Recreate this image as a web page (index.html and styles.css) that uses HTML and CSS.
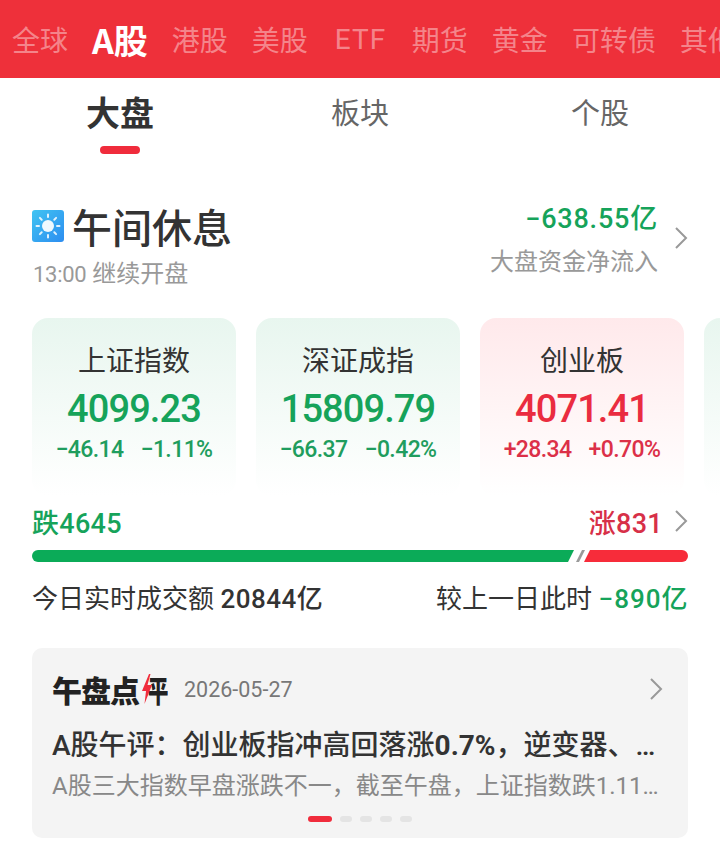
FILE: index.html
```html
<!DOCTYPE html>
<html lang="zh-CN">
<head>
  <meta charset="UTF-8">
  <meta name="viewport" content="width=device-width, initial-scale=1.0">
  <title>A股 大盘</title>
  <link rel="stylesheet" href="styles.css">
</head>
<body>
  <div class="page">
    <!-- 顶部市场切换 -->
    <nav class="market-nav">
      <span>全球</span>
      <span class="active">A股</span>
      <span>港股</span>
      <span>美股</span>
      <span class="etf">ETF</span>
      <span>期货</span>
      <span>黄金</span>
      <span>可转债</span>
      <span>其他</span>
    </nav>

    <div class="sub-nav">
      <div class="sub-item active">大盘</div>
      <div class="sub-item">板块</div>
      <div class="sub-item">个股</div>
    </div>

    <!-- 状态 -->
    <section class="status">
      <div class="status-left">
        <div class="status-title">
          <svg class="sun" viewBox="0 0 32 32">
            <defs>
              <linearGradient id="sky" x1="0" y1="0" x2="1" y2="1">
                <stop offset="0" stop-color="#40c4f2"/>
                <stop offset="1" stop-color="#2d8df0"/>
              </linearGradient>
            </defs>
            <rect width="32" height="32" rx="3" fill="url(#sky)"/>
            <circle cx="16" cy="16" r="6" fill="#fff" fill-opacity=".92"/>
            <g stroke="#fff" stroke-width="2" stroke-linecap="round" stroke-opacity=".85">
              <path d="M16 4.500v2.500M16 25v2.500M4.500 16H7M25 16h2.500M7.900 7.900l1.800 1.800M22.300 22.300l1.800 1.800M24.100 7.900l-1.800 1.800M9.700 22.300l-1.800 1.800"/>
            </g>
          </svg>
          <span>午间休息</span>
        </div>
        <div class="status-sub"><span class="num">13:00</span> 继续开盘</div>
      </div>
      <div class="flow">
        <div class="flow-text">
          <div class="flow-value num">−638.55<span class="cjk">亿</span></div>
          <div class="flow-label">大盘资金净流入</div>
        </div>
        <svg class="chevron" viewBox="0 0 14 24"><path d="M2 2l10 10L2 22"/></svg>
      </div>
    </section>

    <!-- 指数卡片 -->
    <div class="cards">
      <div class="card down">
        <div class="card-name">上证指数</div>
        <div class="card-price">4099.23</div>
        <div class="card-change"><span>−46.14</span><span>−1.11%</span></div>
      </div>
      <div class="card down">
        <div class="card-name">深证成指</div>
        <div class="card-price">15809.79</div>
        <div class="card-change"><span>−66.37</span><span>−0.42%</span></div>
      </div>
      <div class="card up">
        <div class="card-name">创业板</div>
        <div class="card-price">4071.41</div>
        <div class="card-change"><span>+28.34</span><span>+0.70%</span></div>
      </div>
      <div class="card down"></div>
    </div>

    <!-- 涨跌分布 -->
    <div class="breadth">
      <div class="breadth-head">
        <span class="fall">跌<span class="num">4645</span></span>
        <div class="rise-wrap">
          <span class="rise">涨<span class="num">831</span></span>
          <svg class="chevron" viewBox="0 0 14 24"><path d="M2 2l10 10L2 22"/></svg>
        </div>
      </div>
      <div class="bar">
        <div class="bar-fall"></div>
        <div class="bar-slash"></div>
        <div class="bar-rise"></div>
      </div>
      <div class="turnover">
        <div>今日实时成交额 <b class="num">20844</b><b>亿</b></div>
        <div>较上一日此时 <b class="num fall">−890</b><b class="fall">亿</b></div>
      </div>
    </div>

    <!-- 午盘点评 -->
    <section class="review">
      <div class="review-head">
        <div class="review-logo">午盘点<svg class="bolt" viewBox="0 0 10 30"><path d="M7 0L0 17h4L2.500 30 10 11H5.500L8.500 0z"/></svg><span class="logo-last">平</span></div>
        <span class="review-date">2026-05-27</span>
        <svg class="chevron" viewBox="0 0 14 24"><path d="M2 2l10 10L2 22"/></svg>
      </div>
      <div class="review-title">A股午评：创业板指冲高回落涨<b>0.7%</b>，逆变器、储能板块领涨，光伏概念走强</div>
      <div class="review-text">A股三大指数早盘涨跌不一，截至午盘，上证指数跌1.11%，深证成指跌0.42%，创业板指涨0.70%</div>
      <div class="dots">
        <i class="on"></i><i></i><i></i><i></i><i></i>
      </div>
    </section>
  </div>
</body>
</html>
```

FILE: styles.css
```css
body {
  margin: 0;
  background: #fff;
  color: #333;
  font-family: "Roboto", "Noto Sans CJK SC", sans-serif;
}
.page {
  width: 720px;
  height: 862px;
  overflow: hidden;
}
.num {
  font-family: "Roboto", sans-serif;
}
.cjk {
  font-family: "Noto Sans CJK SC", sans-serif;
}
.chevron {
  flex: none;
  width: 14px;
  height: 24px;
  fill: none;
  stroke: #999;
  stroke-width: 2;
}

.market-nav {
  height: 78px;
  background: #ee303a;
  display: flex;
  align-items: center;
  gap: 24px;
  padding-left: 12px;
  overflow: hidden;
  white-space: nowrap;
  font-size: 28px;
  color: rgba(255, 255, 255, 0.42);
}
.market-nav span {
  flex: none;
  font-family: "Noto Sans CJK SC", sans-serif;
}
.market-nav .active {
  color: #fff;
  font-size: 34px;
  font-weight: 700;
}
.market-nav .etf {
  width: 56px;
  font-family: "Roboto", sans-serif;
  padding-left: 3px;
  box-sizing: border-box;
  letter-spacing: 1px;
}

.sub-nav {
  display: flex;
  height: 76px;
}
.sub-item {
  flex: 1;
  position: relative;
  text-align: center;
  padding-top: 13px;
  font-size: 29px;
  line-height: 46px;
  color: #666;
}
.sub-item.active {
  color: #333;
  font-size: 34px;
  font-weight: 700;
}
.sub-item.active::after {
  content: "";
  position: absolute;
  left: 100px;
  top: 68px;
  width: 40px;
  height: 8px;
  border-radius: 4px;
  background: #f02c3c;
}

.status {
  display: flex;
  justify-content: space-between;
  padding: 48px 32px 0;
  height: 124px;
  box-sizing: border-box;
}
.status-title {
  display: flex;
  align-items: center;
  gap: 8px;
  height: 50px;
  margin-top: -1px;
  font-size: 40px;
  font-weight: 500;
}
.sun {
  width: 32px;
  height: 32px;
  margin-top: -1px;
}
.status-sub {
  margin-top: 9px;
  margin-left: 1px;
  font-size: 24px;
  line-height: 28px;
  color: #999;
}
.status-sub .num {
  font-size: 22px;
  letter-spacing: -0.3px;
}
.flow {
  display: flex;
  align-items: center;
  gap: 16px;
  height: 72px;
}
.flow-text {
  text-align: right;
}
.flow-value {
  font-size: 27px;
  line-height: 34px;
  font-weight: 500;
  color: #16a35a;
  letter-spacing: 0.8px;
}
.flow-label {
  margin-top: 11px;
  font-size: 24px;
  line-height: 30px;
  color: #999;
}

.cards {
  display: flex;
  gap: 20px;
  padding-left: 32px;
  margin-top: 40px;
}
.card {
  flex: none;
  width: 204px;
  height: 178px;
  border-radius: 16px;
  text-align: center;
  box-sizing: border-box;
  padding-top: 25px;
}
.card.down {
  background: linear-gradient(#e8f6ef, #fff);
}
.card.up {
  background: linear-gradient(#ffe9eb, #fff);
}
.card-name {
  font-size: 28px;
  line-height: 38px;
}
.card-price {
  margin-top: 4px;
  font-size: 38px;
  line-height: 48px;
  font-weight: 500;
  letter-spacing: -0.9px;
}
.card-change {
  display: flex;
  justify-content: center;
  gap: 17px;
  margin-top: 1px;
  font-size: 23px;
  font-weight: 500;
  line-height: 32px;
  letter-spacing: -0.6px;
}
.down .card-price {
  color: #16a35a;
}
.down .card-change {
  color: #1f9d5e;
}
.up .card-price {
  color: #ea2c40;
}
.up .card-change {
  color: #dc3048;
}

.breadth {
  padding: 9px 32px 0;
}
.breadth-head {
  display: flex;
  justify-content: space-between;
  align-items: center;
  height: 32px;
  font-size: 27px;
  font-weight: 500;
  letter-spacing: 0.3px;
}
.fall {
  color: #16a35a;
}
.rise {
  color: #d73048;
}
.rise-wrap {
  display: flex;
  align-items: center;
  gap: 11px;
}
.bar {
  display: flex;
  height: 12px;
  margin-top: 13px;
}
.bar-fall {
  width: 542px;
  margin-right: -4px;
  background: #0bab58;
  border-radius: 6px 0 0 6px;
  clip-path: polygon(0 0, 100% 0, calc(100% - 6px) 100%, 0 100%);
}
.bar-slash {
  width: 9px;
  margin-left: 6px;
  background: #9a9a9a;
  clip-path: polygon(6px 0, 100% 0, 3px 100%, 0 100%);
}
.bar-rise {
  flex: 1;
  margin-left: -1px;
  background: #f72c3a;
  border-radius: 0 6px 6px 0;
  clip-path: polygon(6px 0, 100% 0, 100% 100%, 0 100%);
}
.turnover {
  display: flex;
  justify-content: space-between;
  margin-top: 18px;
  font-size: 26px;
  line-height: 38px;
}
.turnover b {
  font-weight: 500;
  letter-spacing: 0.5px;
}
.turnover b.num.fall {
  letter-spacing: 1px;
}

.review {
  margin: 30px 32px 0;
  height: 190px;
  box-sizing: border-box;
  padding: 21px 20px 0;
  background: #f4f4f4;
  border-radius: 10px;
}
.review-head {
  display: flex;
  align-items: center;
  height: 40px;
}
.review-logo {
  display: flex;
  align-items: center;
  font-size: 30px;
  font-weight: 900;
  line-height: 40px;
  letter-spacing: -1px;
  color: #222;
  font-family: "Noto Sans CJK SC", sans-serif;
}
.bolt {
  flex: none;
  width: 10px;
  height: 30px;
  fill: #f02c3c;
  margin-left: 3px;
  margin-right: -4px;
  z-index: 1;
}
.logo-last {
  width: 20px;
  transform: scaleX(0.68);
  transform-origin: left center;
}
.review-date {
  margin-left: 16px;
  font-size: 21.500px;
  color: #777;
}
.review-head .chevron {
  margin-left: auto;
  margin-right: 5px;
}
.review-title {
  width: 606px;
  margin-top: 18px;
  font-size: 28px;
  line-height: 38px;
  font-weight: 500;
  color: #333;
  white-space: nowrap;
  overflow: hidden;
  text-overflow: ellipsis;
}
.review-title b {
  font-weight: 700;
}
.review-text {
  width: 612px;
  margin-top: 5px;
  font-size: 24px;
  line-height: 32px;
  color: #888;
  white-space: nowrap;
  overflow: hidden;
  text-overflow: ellipsis;
}
.dots {
  display: flex;
  justify-content: center;
  gap: 8px;
  margin-top: 14px;
}
.dots i {
  width: 12px;
  height: 6px;
  border-radius: 3px;
  background: #e4e4e4;
}
.dots i.on {
  width: 24px;
  background: #f02c3c;
}
```
